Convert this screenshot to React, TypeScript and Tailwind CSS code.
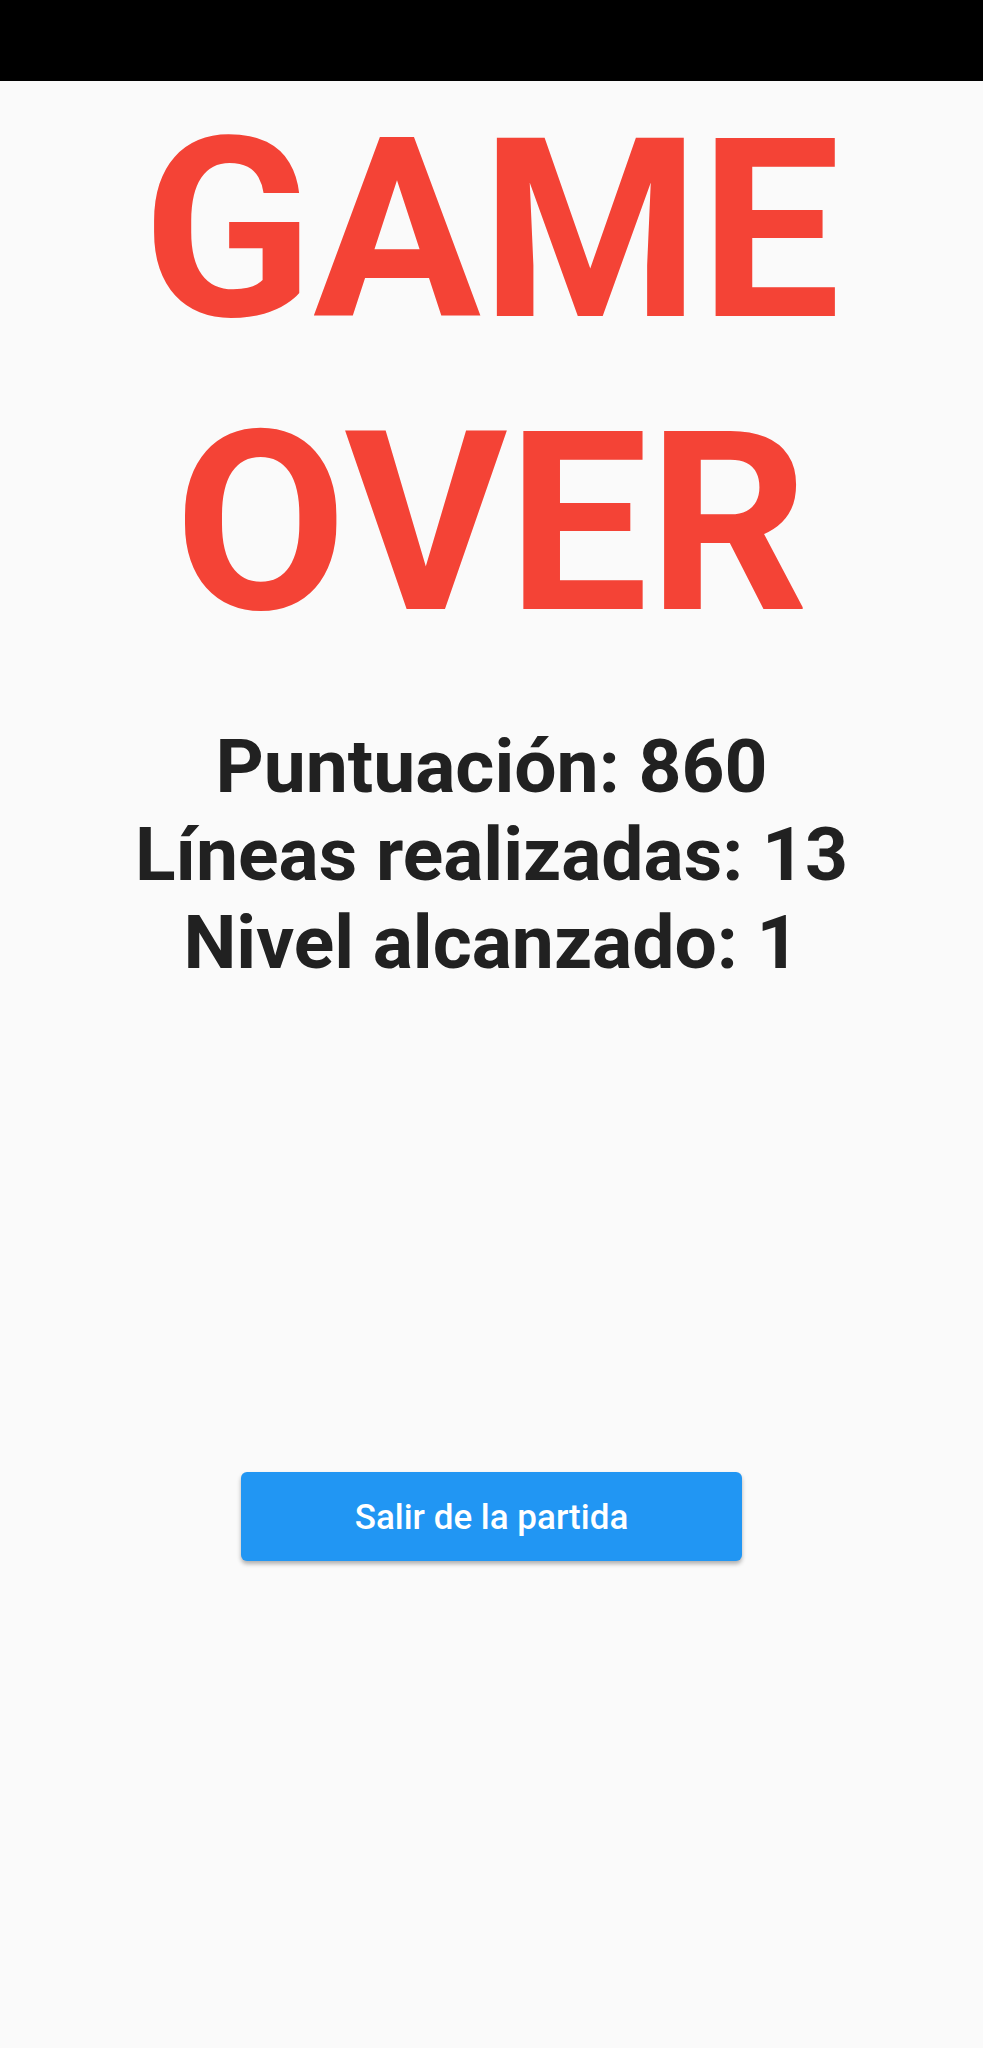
import React from "react";

export default function App() {
  return (
    <div className="min-h-[2048px] w-full bg-[#fafafa] flex flex-col items-center" style={{ fontFamily: "Roboto, 'Noto Sans', sans-serif" }}>
      <div className="w-full h-[81px] bg-black" />
      <h1 className="pt-[3px] text-[250px] font-bold leading-[293px] text-[#f44336] text-center m-0">
        <div>GAME</div>
        <div>OVER</div>
      </h1>
      <div className="mt-[52px] text-[75px] font-bold leading-[88px] text-[#212121] text-center">
        <div>Puntuación: 860</div>
        <div>Líneas realizadas: 13</div>
        <div>Nivel alcanzado: 1</div>
      </div>
      <button className="mt-[486px] w-[501px] h-[89px] rounded-[6px] bg-[#2196f3] text-white text-[35px] font-medium pt-[3px] shadow-[0_3px_4px_rgba(0,0,0,0.3)]">
        Salir de la partida
      </button>
    </div>
  );
}
